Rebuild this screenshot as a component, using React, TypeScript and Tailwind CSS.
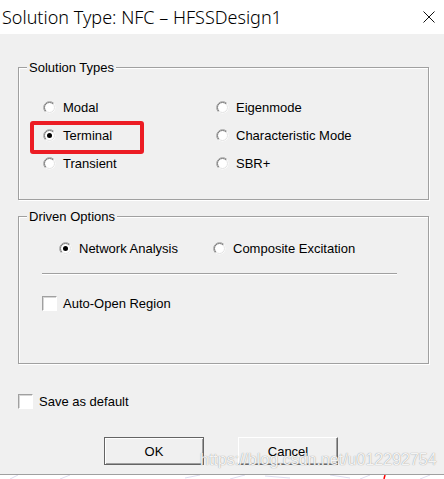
import React from "react";

const Radio = ({ checked }: { checked?: boolean }) => (
  <svg width="13" height="13" viewBox="0 0 13 13" className="shrink-0">
    <circle cx="6.5" cy="6.5" r="6" fill="#fff" />
    <path d="M2.26 10.74A6 6 0 0 1 10.74 2.26" stroke="#a0a0a0" fill="none" />
    <path d="M2.96 10.04A5 5 0 0 1 10.04 2.96" stroke="#7a7a7a" fill="none" />
    <path d="M10.04 2.96A5 5 0 0 1 2.96 10.04" stroke="#e3e3e3" fill="none" />
    {checked && <circle cx="6.5" cy="6.5" r="2.5" fill="#000" />}
  </svg>
);

const RadioRow = ({
  label,
  checked,
  children,
}: {
  label: string;
  checked?: boolean;
  children?: React.ReactNode;
}) => (
  <div className="relative flex items-center h-[28px] gap-[7px]">
    {children}
    <Radio checked={checked} />
    <span className="leading-[13px] whitespace-nowrap">{label}</span>
  </div>
);

const Checkbox = () => (
  <div className="w-[15px] h-[15px] shrink-0 bg-white border border-t-[#a0a0a0] border-l-[#a0a0a0] border-r-white border-b-white shadow-[inset_1px_1px_0_#d6d6d6]" />
);

const Group = ({
  title,
  h,
  mt,
  children,
}: {
  title: string;
  h: string;
  mt: string;
  children: React.ReactNode;
}) => (
  <div
    className={`relative ml-[18px] w-[411px] border border-[#a0a0a0] shadow-[inset_1px_1px_0_#fff,1px_1px_0_#fff] ${h} ${mt}`}
  >
    <span className="absolute left-[8px] -top-[7px] px-[2px] bg-[#f0f0f0] leading-[13px] whitespace-nowrap">
      {title}
    </span>
    {children}
  </div>
);

export default function App() {
  return (
    <div className="relative w-[444px] h-[479px] flex flex-col font-['Liberation_Sans',Arial,sans-serif] text-[13px] text-black overflow-hidden">
      {/* Title bar */}
      <div className="h-[34px] shrink-0 bg-white flex items-center justify-between pl-[2px] pr-[9px]">
        <span className="font-['Noto_Sans','Noto_Sans_CJK_SC',sans-serif] text-[18px] font-light leading-none text-black whitespace-nowrap">
          Solution Type: NFC – HFSSDesign1
        </span>
        <svg width="12" height="12" viewBox="0 0 12 12">
          <path d="M0.5 0.5L11.5 11.5M11.5 0.5L0.5 11.5" stroke="#111" strokeWidth="1" />
        </svg>
      </div>

      {/* Body */}
      <div className="flex-1 bg-[#f0f0f0] flex flex-col">
        <Group title="Solution Types" h="h-[133px]" mt="mt-[33px]">
          <div className="grid grid-cols-[173px_1fr] pl-[24px] pt-[25px]">
            <RadioRow label="Modal" />
            <RadioRow label="Eigenmode" />
            <RadioRow label="Terminal" checked>
              <div className="absolute left-[-13px] top-0 w-[114px] h-[33px] border-[4px] border-[#ec1c24] rounded-[3px]" />
            </RadioRow>
            <RadioRow label="Characteristic Mode" />
            <RadioRow label="Transient" />
            <RadioRow label="SBR+" />
          </div>
        </Group>

        <Group title="Driven Options" h="h-[148px]" mt="mt-[16px]">
          <div className="grid grid-cols-[154px_1fr] pl-[40px] pt-[17px]">
            <RadioRow label="Network Analysis" checked />
            <RadioRow label="Composite Excitation" />
          </div>
          <div className="ml-[23px] mt-[11px] w-[355px] h-[2px] border-t border-t-[#a0a0a0] border-b border-b-white" />
          <div className="mt-[20px] h-[16px] pl-[23px] flex items-center gap-[6px]">
            <Checkbox />
            <span className="leading-[13px]">Auto-Open Region</span>
          </div>
        </Group>

        <div className="ml-[18px] mt-[29px] h-[16px] flex items-center gap-[6px]">
          <Checkbox />
          <span className="leading-[13px]">Save as default</span>
        </div>

        <div className="mt-[28px] flex">
          <button className="ml-[104px] w-[100px] h-[28px] bg-[#f0f0f0] border border-[#646464] shadow-[inset_1px_1px_0_#fff,inset_-1px_-1px_0_#a0a0a0] flex items-center justify-center leading-[13px]">
            OK
          </button>
          <button className="ml-[34px] w-[100px] h-[28px] bg-[#f0f0f0] border border-t-white border-l-white border-r-[#696969] border-b-[#696969] shadow-[inset_-1px_-1px_0_#a0a0a0] flex items-center justify-center leading-[13px]">
            Cancel
          </button>
        </div>
      </div>

      {/* Bottom edge */}
      <div className="h-[5px] shrink-0 bg-white border-t border-[#a0a0a0] relative">
        <svg width="444" height="4" viewBox="0 0 444 4" className="absolute left-0 top-0">
          <path d="M10 4L18 0M60 4L70 0M185 3L200 0M230 4L245 0M265 1L290 3M330 0L350 3M360 4L370 0M420 4L430 0" stroke="#dcdcee" strokeWidth="1" />
          <path d="M384 4L385 0" stroke="#ff0000" strokeWidth="1.5" />
        </svg>
      </div>

      {/* Watermark */}
      <span className="absolute left-[200px] top-[452px] text-[16px] leading-[16px] text-white/90 [text-shadow:0_0_1px_#7a7a7a] whitespace-nowrap pointer-events-none">
        https://blog.csdn.net/u012292754
      </span>
    </div>
  );
}
